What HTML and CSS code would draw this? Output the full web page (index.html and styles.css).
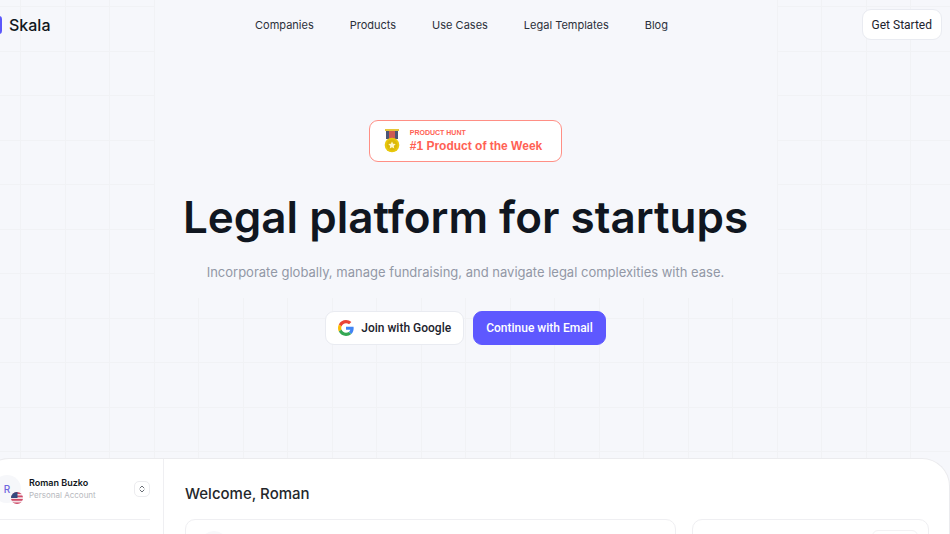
FILE: index.html
```
<!DOCTYPE html>
<html lang="en">
<head>
  <meta charset="UTF-8">
  <meta name="viewport" content="width=device-width, initial-scale=1">
  <title>Skala</title>
  <link rel="stylesheet" href="styles.css">
</head>
<body>
  <div class="page">
    <header class="header">
      <a class="logo" href="#">
        <span class="logo-mark"></span>
        Skala
      </a>
      <nav class="nav">
        <a href="#">Companies</a>
        <a href="#">Products</a>
        <a href="#">Use Cases</a>
        <a href="#">Legal Templates</a>
        <a href="#">Blog</a>
      </nav>
      <button class="btn btn-small" type="button">Get Started</button>
    </header>

    <main class="hero">
      <a class="badge" href="#">
        <svg class="medal" width="16" height="24" viewBox="0 0 16 24" aria-hidden="true">
          <path fill="#4b5575" d="M2 1h12v9H2z"/>
          <path fill="#cf5b52" d="M5 1h6v9H5z"/>
          <path fill="#e5c63a" d="M1 0h14v2H1z"/>
          <circle cx="8" cy="16" r="7.3" fill="#e8c80c"/>
          <circle cx="8" cy="16" r="5.4" fill="#dcb808"/>
          <path fill="#fff6c8" d="M8 12.4l1.1 2.4 2.6.3-1.9 1.8.5 2.6L8 18.2l-2.3 1.3.5-2.6-1.9-1.8 2.6-.3z"/>
        </svg>
        <span class="badge-text">
          <span class="badge-label">PRODUCT HUNT</span>
          <strong>#1 Product of the Week</strong>
        </span>
      </a>
      <h1>Legal platform for startups</h1>
      <p>Incorporate globally, manage fundraising, and navigate legal complexities with ease.</p>
      <div class="actions">
        <button class="btn" type="button">
          <svg width="16" height="16" viewBox="0 0 48 48" aria-hidden="true">
            <path fill="#EA4335" d="M24 9.5c3.54 0 6.71 1.22 9.21 3.6l6.85-6.85C35.9 2.38 30.47 0 24 0 14.62 0 6.51 5.38 2.56 13.22l7.98 6.19C12.43 13.72 17.74 9.5 24 9.5z"/>
            <path fill="#4285F4" d="M46.98 24.55c0-1.57-.15-3.09-.38-4.55H24v9.02h12.94c-.58 2.96-2.26 5.48-4.78 7.18l7.73 6c4.51-4.18 7.09-10.36 7.09-17.65z"/>
            <path fill="#FBBC05" d="M10.53 28.59c-.48-1.45-.76-2.99-.76-4.59s.27-3.14.76-4.59l-7.98-6.19C.92 16.46 0 20.12 0 24s.92 7.54 2.56 10.78l7.97-6.19z"/>
            <path fill="#34A853" d="M24 48c6.48 0 11.93-2.13 15.89-5.81l-7.73-6c-2.15 1.45-4.92 2.3-8.16 2.3-6.26 0-11.57-4.22-13.47-9.91l-7.98 6.19C6.51 42.62 14.62 48 24 48z"/>
          </svg>
          Join with Google
        </button>
        <button class="btn btn-primary" type="button">Continue with Email</button>
      </div>
    </main>

    <section class="app">
      <aside class="sidebar">
        <div class="account">
          <div class="avatar">R
            <svg class="flag" width="12" height="12" viewBox="0 0 12 12" aria-hidden="true">
              <clipPath id="round"><circle cx="6" cy="6" r="6"/></clipPath>
              <g clip-path="url(#round)">
                <path fill="#f3dfe5" d="M0 0h12v12H0z"/>
                <path fill="#cf4c68" d="M0 0h12v2H0zM0 3.5h12v1.7H0zM0 7h12v1.7H0zM0 10.4h12V12H0z"/>
                <path fill="#34497e" d="M0 0h6.5v6H0z"/>
              </g>
            </svg>
          </div>
          <div class="account-text">
            <div class="account-name">Roman Buzko</div>
            <div class="account-type">Personal Account</div>
          </div>
          <button class="switcher" type="button" aria-label="Switch account">
            <svg width="8" height="10" viewBox="0 0 8 10" fill="none" stroke="#6b7078" stroke-linecap="round" stroke-linejoin="round">
              <path d="M2 4l2-2 2 2M2 6l2 2 2-2"/>
            </svg>
          </button>
        </div>
      </aside>
      <div class="content">
        <h2>Welcome, Roman</h2>
        <div class="cards">
          <div class="card"><span class="card-icon"></span></div>
          <div class="card card-side"><span class="card-pill"></span></div>
        </div>
      </div>
    </section>
  </div>
</body>
</html>
```

FILE: styles.css
```
* {
  box-sizing: border-box;
}

body {
  margin: 0;
  overflow: hidden;
  background-color: #f6f7fb;
  font-family: Inter, "Liberation Sans", sans-serif;
  color: #101620;
}

/* slightly wider than the window, the left edge bleeds out */
.page {
  display: flex;
  flex-direction: column;
  height: 100vh;
  margin-left: -19px;
  overflow: hidden;
  /* the first layer keeps the grid clear behind the headline */
  background-image:
    linear-gradient(#f6f7fb, #f6f7fb),
    linear-gradient(90deg, #f1f2f5 1px, transparent 1px, transparent 45px, #f1f2f5 45px, #f1f2f5 46px, transparent 46px),
    linear-gradient(#f1f2f5 1px, transparent 1px, transparent 45px, #f1f2f5 45px, #f1f2f5 46px, transparent 46px);
  background-size: 622px 298px, 89px 89px, 89px 89px;
  background-position: center top, 39px 0, 0 6px;
  background-repeat: no-repeat, repeat, repeat;
}

a {
  color: inherit;
  text-decoration: none;
}

.header {
  display: grid;
  grid-template-columns: 1fr auto 1fr;
  align-items: center;
  padding: 9px 8px;
}

.logo {
  display: flex;
  align-items: center;
  gap: 7px;
  font-size: 16px;
  font-weight: 500;
}

.logo-mark {
  width: 13px;
  height: 18px;
  border-radius: 3px;
  background-color: #5b57fb;
}

.nav {
  display: flex;
  gap: 36px;
  padding-right: 8px;
  color: #2b303a;
  font-size: 11px;
}

.btn {
  display: flex;
  align-items: center;
  gap: 7px;
  height: 34px;
  padding: 0 12px;
  border: 1px solid #e9ebf1;
  border-radius: 9px;
  background-color: #fff;
  color: #1c222c;
  font-family: Roboto, Inter, sans-serif;
  font-size: 12px;
  font-weight: 500;
  cursor: pointer;
}

.btn-small {
  justify-self: end;
  height: 31px;
  padding: 0 9px;
  font-weight: 400;
}

.btn-primary {
  border-color: #5e58ff;
  background-color: #5e58ff;
  color: #fff;
}

.hero {
  display: flex;
  flex-direction: column;
  align-items: center;
  padding: 71px 20px 113px;
}

.badge {
  display: flex;
  align-items: center;
  gap: 10px;
  height: 42px;
  padding: 0 19px 0 14px;
  border: 1px solid #ff8f85;
  border-radius: 9px;
  background-color: #fff;
  color: #ff6154;
  font-family: "Liberation Sans", Arial, sans-serif;
}

.badge-text {
  display: flex;
  flex-direction: column;
  font-size: 12px;
  line-height: 16px;
}

.badge-label {
  font-size: 7px;
  font-weight: bold;
  line-height: 10px;
}

h1 {
  margin: 28px 0 0;
  font-size: 44px;
  font-weight: 600;
  line-height: 54px;
  white-space: nowrap;
}

.hero p {
  margin: 18px 0 29px;
  color: #9298a6;
  font-size: 13px;
  font-weight: 400;
  line-height: 20px;
}

.actions {
  display: flex;
  gap: 9px;
}

.app {
  display: flex;
  flex: 1;
  min-height: 0;
  border: 1px solid #ebebee;
  border-bottom: 0;
  border-radius: 28px 28px 0 0;
  background-color: #fff;
}

.sidebar {
  width: 182px;
  padding: 0 13px 0 11px;
  border-right: 1px solid #efeff2;
}

.account {
  display: flex;
  align-items: center;
  height: 61px;
  border-bottom: 1px solid #efeff2;
}

.avatar {
  position: relative;
  width: 28px;
  height: 28px;
  border-radius: 50%;
  background-color: #f6f7fa;
  color: #6f66dd;
  font-size: 10px;
  font-weight: 500;
  line-height: 28px;
  text-align: center;
}

.flag {
  position: absolute;
  right: -2px;
  bottom: -1px;
}

.account-text {
  flex: 1;
  margin-left: 8px;
  line-height: 13px;
}

.account-name {
  font-size: 9px;
  font-weight: 600;
}

.account-type {
  color: #b7b9be;
  font-size: 8px;
}

.switcher {
  display: flex;
  align-items: center;
  justify-content: center;
  width: 16px;
  height: 16px;
  padding: 0;
  border: 1px solid #ececef;
  border-radius: 5px;
  background-color: #fff;
}

.content {
  flex: 1;
  padding: 25px 20px 0 21px;
}

h2 {
  margin: 0 0 15px;
  color: #24272b;
  font-size: 15px;
  font-weight: 500;
  line-height: 20px;
}

.cards {
  display: flex;
  gap: 16px;
}

.card {
  flex: 1;
  padding: 11px 14px;
  border: 1px solid #efeff2;
  border-radius: 10px;
}

.card-side {
  display: flex;
  flex: 0 0 237px;
  justify-content: flex-end;
  padding: 10px;
}

.card-icon {
  display: block;
  width: 28px;
  height: 28px;
  border-radius: 50%;
  background-color: #f8f8fa;
}

.card-pill {
  width: 46px;
  height: 18px;
  border: 1px solid #f2f2f4;
  border-radius: 6px;
}
```
